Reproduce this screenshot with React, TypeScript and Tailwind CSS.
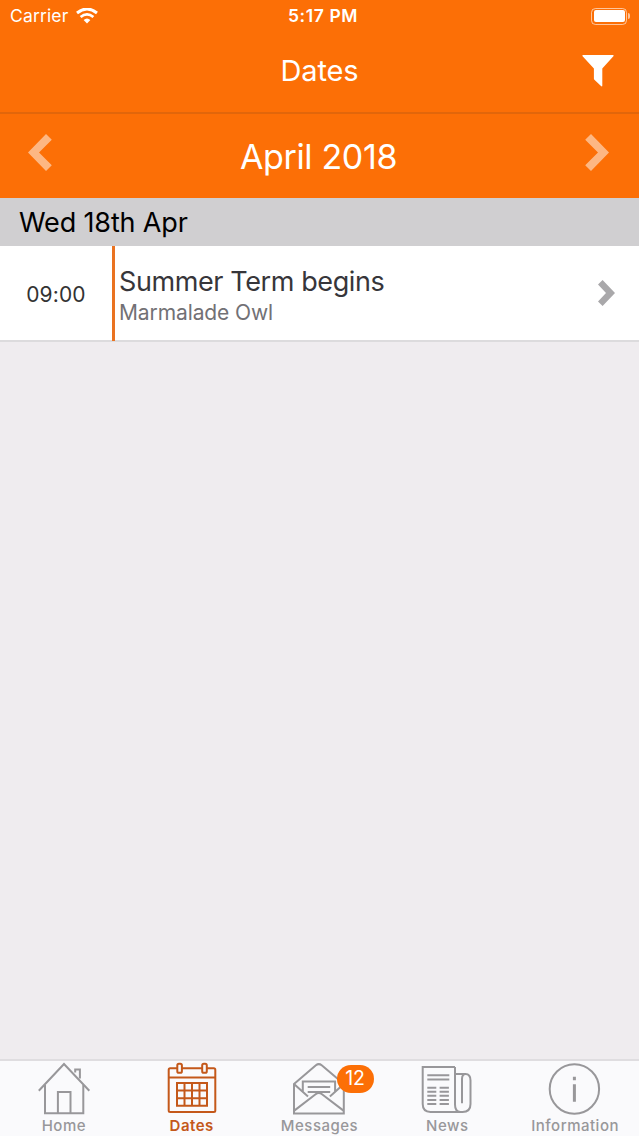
import type { ReactNode } from "react";

type TabItem = {
  label: string;
  icon: ReactNode;
  active?: boolean;
  badge?: number;
};

const HomeIcon = () => (
  <>
    <path d="M4.8 29.7 30 3l25.3 26.7" />
    <path d="M11 24v28.3h38.3V24" />
    <path d="M23.9 52V31h12.6v21" />
    <path d="M41.2 11.5v-3h4.7v9" />
  </>
);

const CalendarIcon = () => (
  <>
    <path d="M15.3 7.3H8.2a1.5 1.5 0 0 0-1.5 1.5v40.8a1.5 1.5 0 0 0 1.5 1.5h43.6a1.5 1.5 0 0 0 1.5-1.5V8.8a1.5 1.5 0 0 0-1.5-1.5h-7.1M20 7.3h20.3M6.7 16.5h46.6" />
    <rect x="15.3" y="2.8" width="4.6" height="9" rx="1.6" />
    <rect x="40.2" y="2.8" width="4.6" height="9" rx="1.6" />
    <path d="M15 22h30v22.7H15zM22.5 22v22.7M30 22v22.7M37.5 22v22.7M15 29.6h30M15 37.2h30" />
  </>
);

const EnvelopeIcon = () => (
  <>
    <path d="M5 23 26.9 4.3q2.9-2.4 5.8 0L54.8 23v29.4H5z" />
    <path d="M5 23 19 35.5M54.8 23 40.9 35.5" />
    <path d="M13.8 30.5V20.6h32.3v9.9" />
    <path d="M18.7 25.9h22.5M18.7 31h22.5" />
    <path d="m5.3 49.6 21.3-16.4q3.2-2.4 6.4 0l21.5 16.4" />
  </>
);

const NewsIcon = () => (
  <>
    <path d="M38 5.9H5.7v37.2q0 7.8 7.8 7.8h32q8 0 8-8V19.5q0-6.5-5-6.5H38" />
    <path d="M38 5.9v37.6q0 7.4 5.4 7.4M48.7 13q-3.7 0-3.7 5v24.3" />
    <path d="M10.3 14.3h22M10.3 18.5h22" />
    <path d="M10.3 26.7h9M10.3 30.7h9M10.3 34.8h9M10.3 38.9h9M10.3 43h9" />
    <path d="M22.6 26.7h9.3M22.6 30.7h9.3M22.6 34.8h9.3M22.6 38.9h9.3M22.6 43h9.3" />
  </>
);

const InfoIcon = () => (
  <>
    <circle cx="29.4" cy="28" r="24.7" />
    <path d="M29.4 15.7v3.6M29.4 23.2v17.5" strokeWidth="3" />
  </>
);

const tabs: TabItem[] = [
  { label: "Home", icon: <HomeIcon /> },
  { label: "Dates", icon: <CalendarIcon />, active: true },
  { label: "Messages", icon: <EnvelopeIcon />, badge: 12 },
  { label: "News", icon: <NewsIcon /> },
  { label: "Information", icon: <InfoIcon /> },
];

const WifiIcon = () => (
  <svg width="22" height="16" viewBox="0 0 22 16" fill="none" stroke="white">
    <path d="M1 5q10-8 20 0" strokeWidth="3" />
    <path d="M4.6 9q6.4-5.2 12.8 0" strokeWidth="2.7" />
    <path d="M11 15.4 7.6 12q3.4-3 6.8 0z" fill="white" stroke="none" />
  </svg>
);

const StatusBar = () => (
  <div className="grid h-8 grid-cols-3 items-center text-white">
    <div className="flex items-center gap-[8px] pl-[10px]">
      <span className="text-[17.5px] tracking-[0.15px]">Carrier</span>
      <WifiIcon />
    </div>
    <span className="pl-[7px] text-center text-[17.5px] font-semibold tracking-[0.6px]">
      5:17 PM
    </span>
    <div className="flex items-center justify-end gap-px pr-[9px]">
      <div className="h-[17px] w-9 rounded-[4.5px] border border-white/60 p-[1.5px]">
        <div className="h-full rounded-[2px] bg-white" />
      </div>
      <div className="h-[6px] w-[2px] rounded-r-full bg-white/60" />
    </div>
  </div>
);

const NavBar = () => (
  <div className="grid h-[82px] grid-cols-[1fr_auto_1fr] items-center border-b-2 border-[#e2660a] pb-[3px] text-white">
    <span />
    <h1 className="text-[29px] leading-none tracking-[-0.1px]">Dates</h1>
    <svg
      className="mr-[25px] justify-self-end"
      width="32"
      height="32"
      viewBox="0 0 32 32"
      fill="white"
    >
      <path d="M1.2 0h29.6q1.6 0 .6 1.3L20.3 13.5v17q0 1.6-1.3.6l-6.6-6.3q-.5-.5-.5-1.2V13.5L.6 1.3Q-.4 0 1.2 0z" />
    </svg>
  </div>
);

const MonthBar = () => (
  <div className="flex h-[84px] items-center justify-between px-7 text-white">
    <svg
      className="-mt-[7px] opacity-50"
      width="24"
      height="37"
      viewBox="0 0 24 37"
      fill="white"
    >
      <path d="M18 0 23.8 5.8 11 18.5l12.8 12.7L18 37 0 18.5z" />
    </svg>
    <h2 className="pt-px text-[34px] leading-none tracking-[-0.35px]">
      April 2018
    </h2>
    <svg
      className="-mt-[7px] mr-[2px] opacity-50"
      width="24"
      height="37"
      viewBox="0 0 24 37"
      fill="white"
    >
      <path d="M6 0 .2 5.8 13 18.5.2 31.2 6 37l18-18.5z" />
    </svg>
  </div>
);

const EventRow = () => (
  <div className="flex h-24 border-b-2 border-[#dcdbdd] bg-white">
    <div className="flex w-28 items-center justify-center pt-1 text-[21px] tracking-[0.15px] text-[#333]">
      09:00
    </div>
    <div className="-mb-px w-[3px] bg-[#ea7321]" />
    <div className="flex flex-1 flex-col justify-center pt-[7px] pl-1">
      <p className="text-[27px] leading-8 tracking-[-0.4px] text-[#37363a]">
        Summer Term begins
      </p>
      <p className="text-[21px] leading-[30px] tracking-[-0.1px] text-[#727175]">
        Marmalade Owl
      </p>
    </div>
    <svg
      className="mr-6 self-center"
      width="17"
      height="26"
      viewBox="0 0 17 26"
      fill="#a9a8aa"
    >
      <path d="M4.6 0 0 4.6 8 13l-8 8.4L4.6 26 17 13z" />
    </svg>
  </div>
);

const TabBar = () => (
  <nav className="grid h-[77px] grid-cols-5 border-t-2 border-[#dfdde0] bg-[#fafafc]">
    {tabs.map(({ label, icon, active, badge }) => (
      <div
        key={label}
        className={`relative flex flex-col items-center ${
          active ? "text-[#c4581a]" : "text-[#98979a]"
        }`}
      >
        <svg
          width="60"
          height="54"
          viewBox="0 0 60 54"
          fill="none"
          stroke="currentColor"
          strokeWidth="2"
        >
          {icon}
        </svg>
        <span
          className={`pt-px text-[15px] leading-[20px] tracking-[0.5px] ${
            active ? "font-semibold" : "font-medium"
          }`}
        >
          {label}
        </span>
        {badge && (
          <span className="absolute top-1 left-[81px] flex h-[28px] w-[37px] items-center justify-center rounded-full bg-[#fc6f06] text-[19.5px] text-white">
            {badge}
          </span>
        )}
      </div>
    ))}
  </nav>
);

export default function App() {
  return (
    <div className="flex h-[1136px] w-full flex-col overflow-hidden bg-[#efecef] font-['Inter','Liberation_Sans',sans-serif]">
      <header className="bg-[#fc6f06]">
        <StatusBar />
        <NavBar />
        <MonthBar />
      </header>
      <main className="flex-1">
        <h3 className="flex h-12 items-center bg-[#d0cfd1] pt-0.5 pl-[19px] text-[27px] tracking-[-0.15px] text-black">
          Wed 18th Apr
        </h3>
        <EventRow />
      </main>
      <TabBar />
    </div>
  );
}
